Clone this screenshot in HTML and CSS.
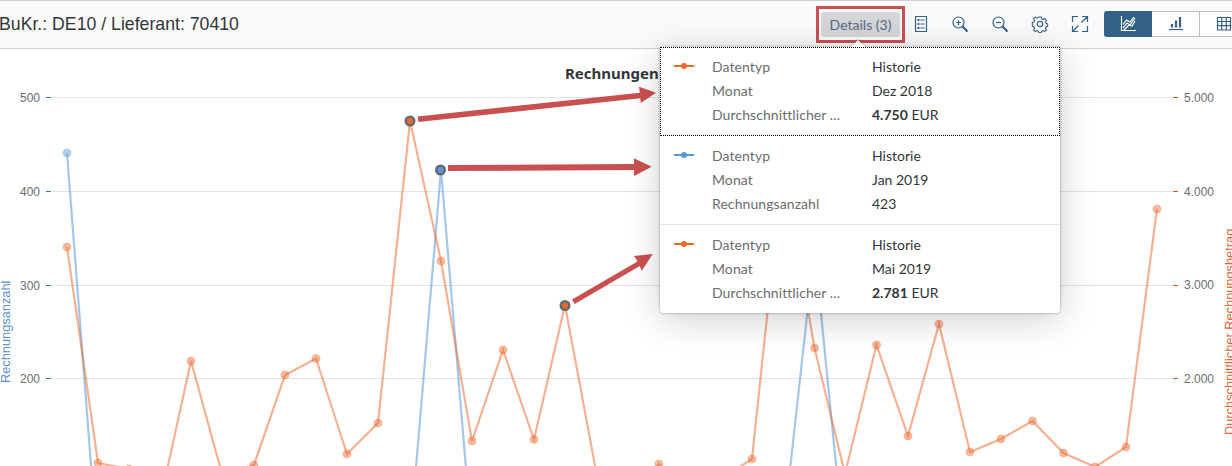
FILE: index.html
```html
<!DOCTYPE html>
<html lang="de">
<head>
<meta charset="utf-8">
<title>Rechnungen</title>
<link rel="stylesheet" href="styles.css">
</head>
<body>
<div class="page">
  <header class="toolbar">
    <h1 class="toolbar-title">BuKr.: DE10 / Lieferant: 70410</h1>
    <div class="toolbar-actions">
      <div class="details-frame">
        <button class="details-btn">Details (3)</button>
      </div>
      <button class="icon-btn icon-first">
        <svg width="16" height="18" viewBox="0 0 16 18"><path class="ico" d="M3.500 1.500h11v15h-11z"/><path class="ico thick" d="M5.500 5h2M5.500 9h2M5.500 13h2"/><path class="ico" d="M8.500 5h4M8.500 9h4M8.500 13h4"/></svg>
      </button>
      <button class="icon-btn">
        <svg width="18" height="18" viewBox="0 0 18 18"><circle class="ico" cx="7.500" cy="7.500" r="5.500"/><path class="ico" d="M5 7.500h5M7.500 5v5"/><path class="ico thick" d="M11.500 11.500l5 5"/></svg>
      </button>
      <button class="icon-btn">
        <svg width="18" height="18" viewBox="0 0 18 18"><circle class="ico" cx="7.500" cy="7.500" r="5.500"/><path class="ico" d="M5 7.500h5"/><path class="ico thick" d="M11.500 11.500l5 5"/></svg>
      </button>
      <button class="icon-btn">
        <svg width="18" height="18" viewBox="0 0 18 18"><circle class="ico" cx="9" cy="9" r="2.700"/><path class="ico" d="M7.600 1.500h2.800l.4 2.200 1.500.7 1.900-1.200 2 2-1.200 1.900.7 1.500 1.800.5v2.800l-1.800.5-.7 1.500 1.200 1.900-2 2-1.900-1.200-1.500.7-.4 1.900H7.600l-.4-1.900-1.500-.7-1.900 1.200-2-2 1.200-1.900-.7-1.500-1.800-.5V7.600l1.800-.5.7-1.500-1.200-1.900 2-2 1.900 1.200 1.500-.7z" transform="translate(.9 .6) scale(.9)"/></svg>
      </button>
      <button class="icon-btn">
        <svg width="18" height="18" viewBox="0 0 18 18"><path class="ico" d="M11 1.500h5.500V7M16.500 1.500L10.500 7.500M7 16.500H1.500V11M1.500 16.500l6-6M1.500 7V1.500H7M11 16.500h5.500V11"/></svg>
      </button>
      <div class="segments">
        <button class="segment is-active">
          <svg width="18" height="18" viewBox="0 0 18 18"><path class="ico-w" d="M2.500 1v14.500H17"/><path class="ico-w" d="M4 13L8 8l3 2 5-7M4 9.500L7.500 5l3.500 2 4-5M5 15l5-5 3 1 3-5"/></svg>
        </button>
        <button class="segment">
          <svg width="18" height="18" viewBox="0 0 18 18"><path class="ico" d="M2 14.500h14"/><path class="ico thick" d="M5 12.500V9M9 12.500V5.500M13 12.500V2"/></svg>
        </button>
        <button class="segment is-last">
          <svg width="18" height="18" viewBox="0 0 18 18"><path class="ico" d="M2.500 2.500h13v12.500h-13zM2.500 6.500h13M2.500 10.700h13M6.800 2.500V15M11.200 2.500V15"/></svg>
        </button>
      </div>
    </div>
  </header>

  <main class="chart-area">
    <svg class="chart" width="1232" height="417" viewBox="0 49 1232 417">
      <g class="grid">
        <line x1="52" y1="97.500" x2="1172" y2="97.500"/>
        <line x1="52" y1="191.500" x2="1172" y2="191.500"/>
        <line x1="52" y1="285.500" x2="1172" y2="285.500"/>
        <line x1="52" y1="378.500" x2="1172" y2="378.500"/>
      </g>
      <g class="tick-left">
        <line x1="46" y1="97.500" x2="51" y2="97.500"/>
        <line x1="46" y1="191.500" x2="51" y2="191.500"/>
        <line x1="46" y1="285.500" x2="51" y2="285.500"/>
        <line x1="46" y1="378.500" x2="51" y2="378.500"/>
      </g>
      <g class="tick-right">
        <line x1="1173" y1="97.500" x2="1178" y2="97.500"/>
        <line x1="1173" y1="191.500" x2="1178" y2="191.500"/>
        <line x1="1173" y1="285.500" x2="1178" y2="285.500"/>
        <line x1="1173" y1="378.500" x2="1178" y2="378.500"/>
      </g>
      <g class="axis-label">
        <text x="40" y="102" text-anchor="end">500</text>
        <text x="40" y="196" text-anchor="end">400</text>
        <text x="40" y="290" text-anchor="end">300</text>
        <text x="40" y="383" text-anchor="end">200</text>
        <text x="1184" y="102">5.000</text>
        <text x="1184" y="196">4.000</text>
        <text x="1184" y="289">3.000</text>
        <text x="1184" y="383">2.000</text>
      </g>
      <text class="axis-title-left" transform="translate(10 383) rotate(-90)">Rechnungsanzahl</text>
      <text class="axis-title-right" transform="translate(1233.500 435) rotate(-90)">Durchschnittlicher Rechnungsbetrag</text>
      <text class="chart-title" x="565" y="79">Rechnungen</text>

      <polyline class="line-blue" points="67,153 98,556"/>
      <polyline class="line-blue" points="410,539 441,170 472,540"/>
      <polyline class="line-blue" points="783,533 814.500,248 845,555"/>
      <polyline class="line-orange" points="67,247 98,463 129,469 160,502 191,361 222,474 254,465 285,375 316,358.500 347,454 378,423 410,121 441,261 472,441 503,350 534,439.500 565,305 596,471 627,500 659,464 690,500 721,479 752,459 783,165 814.500,348 845,474 876.500,345 908,436 939,324 970,452 1001,439 1032.500,421 1063.500,453 1095,467 1126,447 1157,209"/>
      <g class="dots-blue">
        <circle cx="67" cy="153" r="4"/>
      </g>
      <g class="dots-orange">
        <circle cx="67" cy="247" r="4"/><circle cx="98" cy="463" r="4"/><circle cx="129" cy="469" r="4"/><circle cx="191" cy="361" r="4"/><circle cx="254" cy="465" r="4"/><circle cx="285" cy="375" r="4"/><circle cx="316" cy="358.500" r="4"/><circle cx="347" cy="454" r="4"/><circle cx="378" cy="423" r="4"/><circle cx="441" cy="261" r="4"/><circle cx="472" cy="441" r="4"/><circle cx="503" cy="350" r="4"/><circle cx="534" cy="439.500" r="4"/><circle cx="659" cy="464" r="4"/><circle cx="752" cy="459" r="4"/><circle cx="814.500" cy="348" r="4"/><circle cx="876.500" cy="345" r="4"/><circle cx="908" cy="436" r="4"/><circle cx="939" cy="324" r="4"/><circle cx="970" cy="452" r="4"/><circle cx="1001" cy="439" r="4"/><circle cx="1032.500" cy="421" r="4"/><circle cx="1063.500" cy="453" r="4"/><circle cx="1095" cy="467" r="4"/><circle cx="1126" cy="447" r="4"/><circle cx="1157" cy="209" r="4"/>
      </g>
      <circle class="dot-sel-orange" cx="410" cy="121" r="4.300"/>
      <circle class="dot-sel-blue" cx="440.500" cy="170" r="4.300"/>
      <circle class="dot-sel-orange" cx="565" cy="305.500" r="4.300"/>
      <g class="arrows">
        <polygon points="417.600,116.500 639.800,92.700 639,86.700 656,92.700 640.700,103 640.300,98.300 418.300,122"/>
        <polygon points="448,165 634,164 634,158.300 651.700,166.800 634,176 634,170 448,171"/>
        <polygon points="572,299.500 637.500,261.500 634,256 652.700,254 641.700,270.700 639.800,266 574.700,304"/>
      </g>
    </svg>

    <div class="popover">
      <span class="popover-tip"></span>
      <section class="pop-section is-focus">
        <div class="pop-row"><span class="legend legend-orange"></span><span class="pop-label">Datentyp</span><span class="pop-value">Historie</span></div>
        <div class="pop-row"><span class="legend"></span><span class="pop-label">Monat</span><span class="pop-value">Dez 2018</span></div>
        <div class="pop-row"><span class="legend"></span><span class="pop-label">Durchschnittlicher ...</span><span class="pop-value"><b>4.750</b> EUR</span></div>
      </section>
      <section class="pop-section">
        <div class="pop-row"><span class="legend legend-blue"></span><span class="pop-label">Datentyp</span><span class="pop-value">Historie</span></div>
        <div class="pop-row"><span class="legend"></span><span class="pop-label">Monat</span><span class="pop-value">Jan 2019</span></div>
        <div class="pop-row"><span class="legend"></span><span class="pop-label">Rechnungsanzahl</span><span class="pop-value">423</span></div>
      </section>
      <section class="pop-section">
        <div class="pop-row"><span class="legend legend-orange"></span><span class="pop-label">Datentyp</span><span class="pop-value">Historie</span></div>
        <div class="pop-row"><span class="legend"></span><span class="pop-label">Monat</span><span class="pop-value">Mai 2019</span></div>
        <div class="pop-row"><span class="legend"></span><span class="pop-label">Durchschnittlicher ...</span><span class="pop-value"><b>2.781</b> EUR</span></div>
      </section>
    </div>
  </main>
</div>
</body>
</html>
```
FILE: styles.css
```css
* { box-sizing: border-box; }
html, body { margin: 0; padding: 0; background: #fff; overflow: hidden; }
.page { width: 1232px; height: 466px; overflow: hidden; display: flex; flex-direction: column; }
.toolbar {
  height: 49px; flex: none; display: flex; align-items: center; justify-content: space-between;
  background: #fafafa; border-top: 1px solid #cfcfcf; border-bottom: 1px solid #d0d0d0;
  padding-bottom: 1px;
}
.toolbar-title { margin: 0 0 0 -1px; font: 400 17.7px "Liberation Sans", Arial, sans-serif; color: #32363a; white-space: nowrap; }
.toolbar-actions { display: flex; align-items: center; flex: none; }
button { font: inherit; padding: 0; background: none; border: 0; }
.details-frame {
  width: 89px; height: 37px; display: flex; align-items: center; justify-content: center;
  border: 3px solid #c9504f;
}
.details-btn {
  width: 79px; height: 25px; border-radius: 3px; background: #d5d6d7;
  font: 400 14px Lato, sans-serif; color: #54698a;
}
.icon-btn { width: 40px; height: 25px; display: flex; align-items: center; justify-content: center; }
.icon-first { margin-left: -5px; }
.ico { fill: none; stroke: #346187; stroke-width: 1.2; }
.ico.thick { stroke-width: 2.2; }
.ico-w { fill: none; stroke: #fff; stroke-width: 1.2; }
.segments { display: flex; margin-left: 4px; margin-right: -16px; }
.segment {
  width: 48px; height: 26px; display: flex; align-items: center; justify-content: center;
  background: #fff; border: 1px solid #bfbfbf; border-left: 0;
}
.segment.is-active { background: #346187; border-color: #346187; border-radius: 3px 0 0 3px; }
.chart-area { position: relative; flex: 1; min-height: 0; }
.chart { display: block; }
.grid line { stroke: #e2e2e2; stroke-width: 1; }
.tick-left line { stroke: #3a78c0; stroke-width: 1; }
.tick-right line { stroke: #d4581c; stroke-width: 1; }
.axis-label text { font: 12px "Liberation Sans", sans-serif; fill: #6a6d70; }
.axis-title-left { font: 12.8px "Liberation Sans", sans-serif; fill: #5b90d0; }
.axis-title-right { font: 12.8px "Liberation Sans", sans-serif; fill: #e0643a; }
.chart-title { font: 700 15px "Noto Sans", sans-serif; fill: #32363a; }
.line-blue { fill: none; stroke: #5899da; stroke-opacity: .55; stroke-width: 2.2; }
.line-orange { fill: none; stroke: #e9692c; stroke-opacity: .52; stroke-width: 2.2; }
.dots-orange circle { fill: #e9692c; fill-opacity: .45; stroke: #e9692c; stroke-opacity: .18; stroke-width: 1.5; }
.dots-blue circle { fill: #5899da; fill-opacity: .45; stroke: #5899da; stroke-opacity: .18; stroke-width: 1.5; }
.dot-sel-orange { fill: #e9692c; stroke: #666a6e; stroke-width: 2.4; }
.dot-sel-blue { fill: #5899da; stroke: #666a6e; stroke-width: 2.4; }
.arrows polygon { fill: #c95050; }
.popover {
  position: absolute; left: 660px; top: -2px; width: 400px; height: 266px; background: #fff;
  border-radius: 4px; box-shadow: 0 0 3px rgba(0,0,0,.35), 0 6px 36px rgba(0,0,0,.2);
  font: 400 14px Lato, sans-serif;
}
.popover-tip {
  position: absolute; left: 193px; top: -5px; width: 10px; height: 10px; background: #fff;
  transform: rotate(45deg); box-shadow: -1px -1px 2px rgba(0,0,0,.12);
}
.pop-section { position: relative; height: 89px; padding: 7px 0 0; border-bottom: 1px solid #e4e4e4; background: #fff; }
.pop-section:last-child { border-bottom: 0; height: 88px; border-radius: 0 0 4px 4px; }
.pop-section.is-focus { outline: 1px dotted #000; outline-offset: -1px; border-bottom: 0; }
.pop-row { height: 24px; display: flex; align-items: center; }
.legend { flex: none; position: relative; width: 20px; height: 2px; margin: 0 18px 0 14px; }
.legend-orange { background: #e9692c; }
.legend-blue { background: #5899da; }
.legend-orange::after, .legend-blue::after {
  content: ""; position: absolute; left: 7px; top: -2px; width: 6px; height: 6px; border-radius: 50%;
}
.legend-orange::after { background: #e9692c; }
.legend-blue::after { background: #5899da; }
.pop-label { width: 160px; flex: none; color: #6a6d70; white-space: nowrap; letter-spacing: .08px; }
.pop-value { color: #32363a; white-space: nowrap; }
.pop-value b { font-weight: 700; }
```
